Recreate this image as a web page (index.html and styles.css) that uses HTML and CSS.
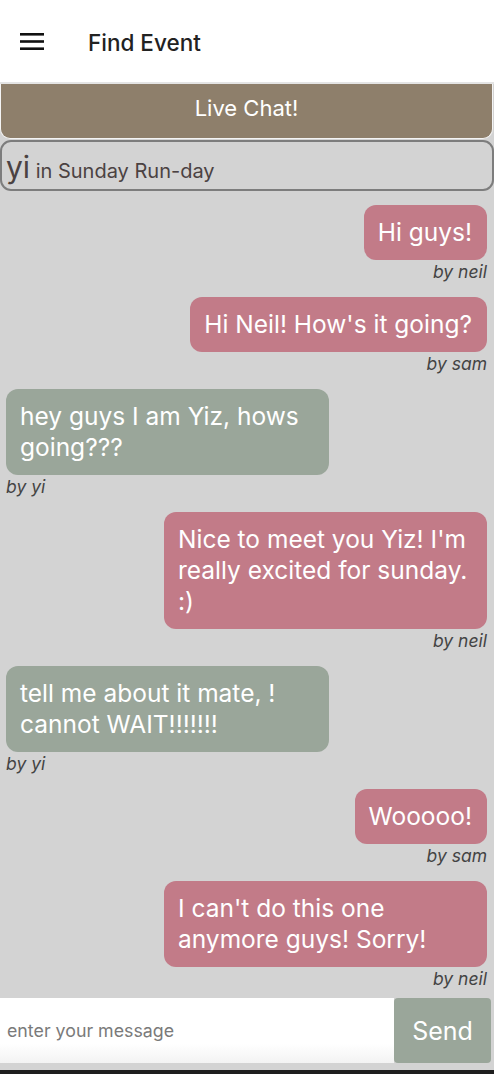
FILE: index.html
```html
<!DOCTYPE html>
<html lang="en">
<head>
<meta charset="utf-8">
<title>Find Event</title>
<link rel="stylesheet" href="styles.css">
</head>
<body>
<div class="app">
  <header class="topbar">
    <svg class="menu-icon" width="24" height="18" viewBox="0 0 24 18" aria-hidden="true">
      <rect x="0" y="0" width="24" height="2.6" fill="#111"/>
      <rect x="0" y="7.2" width="24" height="2.6" fill="#111"/>
      <rect x="0" y="14.4" width="24" height="2.6" fill="#111"/>
    </svg>
    <h1 class="title">Find Event</h1>
  </header>
  <div class="live-bar">Live Chat!</div>
  <div class="room"><span class="room-user">yi</span> <span class="room-name">in Sunday Run-day</span></div>
  <main class="messages">
    <div class="msg mine"><div class="bubble pink">Hi guys!</div><div class="by">by neil</div></div>
    <div class="msg mine"><div class="bubble pink">Hi Neil! How's it going?</div><div class="by">by sam</div></div>
    <div class="msg theirs"><div class="bubble green">hey guys I am Yiz, hows going???</div><div class="by">by yi</div></div>
    <div class="msg mine"><div class="bubble pink">Nice to meet you Yiz! I'm really excited for sunday. :)</div><div class="by">by neil</div></div>
    <div class="msg theirs"><div class="bubble green">tell me about it mate, ! cannot WAIT!!!!!!!</div><div class="by">by yi</div></div>
    <div class="msg mine"><div class="bubble pink">Wooooo!</div><div class="by">by sam</div></div>
    <div class="msg mine"><div class="bubble pink">I can't do this one anymore guys! Sorry!</div><div class="by">by neil</div></div>
  </main>
  <form class="composer">
    <input class="composer-input" type="text" placeholder="enter your message">
    <button class="send" type="button">Send</button>
  </form>
  <div class="bottom-strip"></div>
</div>
</body>
</html>
```

FILE: styles.css
```css
* { box-sizing: border-box; }
html, body { margin: 0; padding: 0; }
body {
  background: #d3d3d3;
  font-family: Inter, "Noto Sans", "Liberation Sans", sans-serif;
  color: #222;
}
.app {
  height: 1074px;
  display: flex;
  flex-direction: column;
  overflow: hidden;
}
.topbar {
  height: 84px;
  background: #fff;
  border-bottom: 2px solid #e4e4e4;
  display: flex;
  align-items: center;
  padding-left: 20px;
  padding-top: 2px;
  flex: none;
}
.menu-icon { display: block; }
.title {
  margin: 0 0 0 44px;
  font-size: 22.5px;
  font-weight: 500;
  color: #222;
}
.live-bar {
  flex: none;
  width: 493px;
  height: 55px;
  background: #8e7f6b;
  border: 1px solid #f4f4f4;
  border-top: none;
  border-radius: 0 0 10px 10px;
  color: #fff;
  font-size: 22px;
  display: flex;
  align-items: center;
  justify-content: center;
  padding-bottom: 6px;
}
.room {
  flex: none;
  height: 51px;
  border: 2px solid #7d7d7d;
  border-radius: 11px;
  margin-top: 1px;
  padding: 9px 4px 0 4px;
  color: #4b4242;
  white-space: nowrap;
}
.room-user { font-size: 30px; line-height: 32px; }
.room-name { font-size: 20px; margin-left: 1px; }
.messages {
  flex: 1;
  overflow: hidden;
  padding: 14px 7px 0 6px;
  display: flex;
  flex-direction: column;
  gap: 15px;
}
.msg { display: flex; flex-direction: column; }
.msg.mine { align-items: flex-end; }
.msg.theirs { align-items: flex-start; }
.bubble {
  max-width: 323px;
  padding: 12px 15px 12px 14px;
  border-radius: 12px;
  color: #fff;
  font-size: 24.5px;
  line-height: 31px;
}
.pink { background: #c27b88; }
.green { background: #9aa69a; }
.by {
  margin-top: 2px;
  font-style: italic;
  font-size: 17.5px;
  line-height: 20px;
  color: #444;
}
.composer {
  flex: none;
  margin: 0;
  display: flex;
  height: 65px;
  padding-right: 3px;
}
.composer-input {
  flex: 1;
  min-width: 0;
  border: none;
  outline: none;
  margin: 0;
  padding: 0 7px;
  background: linear-gradient(#fff 0%, #fff 70%, #f3f3f3 100%);
  font-family: inherit;
  font-size: 17.8px;
  color: #333;
}
.composer-input::placeholder { color: #7a7a7a; }
.send {
  flex: none;
  width: 97px;
  height: 65px;
  border: none;
  margin: 0;
  border-radius: 4px;
  background: #9aa69a;
  color: #fff;
  font-family: inherit;
  font-size: 25px;
}
.bottom-strip {
  flex: none;
  margin-top: 7px;
  height: 4px;
  background: #1e1e1e;
}
```
